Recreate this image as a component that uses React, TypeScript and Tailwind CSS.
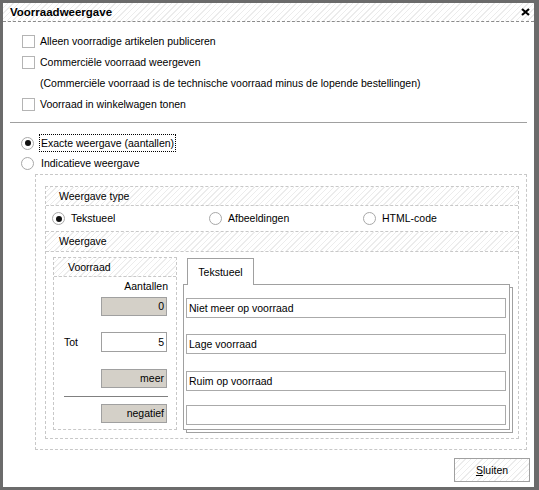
import React from "react";

const hatch =
  "bg-[repeating-linear-gradient(135deg,#ffffff_0px,#ffffff_3px,#ececec_3px,#ececec_4px)]";

function Checkbox() {
  return <span className="w-[13px] h-[13px] border border-[#b4b4b4] bg-white shrink-0" />;
}

function Radio({ checked = false }: { checked?: boolean }) {
  return (
    <span className="w-[13px] h-[13px] rounded-full border border-[#a8a8a8] bg-white shrink-0 flex items-center justify-center">
      {checked && <span className="w-[6px] h-[6px] rounded-full bg-[#111]" />}
    </span>
  );
}

function CheckRow({ label }: { label: string }) {
  return (
    <div className="h-[21px] flex items-center gap-[5px]">
      <Checkbox />
      <span>{label}</span>
    </div>
  );
}

function GrayField({ value }: { value: string }) {
  return (
    <div className="w-[66px] h-[19px] border border-[#a0a0a0] bg-[#d4d0c8] flex items-center justify-end pr-[2px]">
      {value}
    </div>
  );
}

function TextField({ value }: { value: string }) {
  return (
    <div className="h-[20px] border border-[#aaaaaa] bg-white flex items-center pl-[2px]">
      {value}
    </div>
  );
}

export default function App() {
  return (
    <div className="w-[539px] h-[490px] bg-[#6b6b6b] pt-[3px] pl-[3px] pr-[5px] pb-[3px] font-['Liberation_Sans',Arial,sans-serif] text-[10.5px] text-black leading-none">
      <div className="w-full h-full bg-white flex flex-col">
        {/* title bar */}
        <div className={`h-[19px] shrink-0 border-b border-dashed border-[#8a8a8a] flex items-center justify-between pl-[7px] pr-[4px] ${hatch}`}>
          <span className="font-bold text-[11.5px] mt-px">Voorraadweergave</span>
          <svg width="9" height="8" viewBox="0 0 9 8">
            <path d="M1 1 L8 7 M8 1 L1 7" stroke="#000" strokeWidth="2.2" />
          </svg>
        </div>

        {/* checkboxes */}
        <div className="pt-[9px] pl-[19px]">
          <CheckRow label="Alleen voorradige artikelen publiceren" />
          <CheckRow label="Commerciële voorraad weergeven" />
          <div className="h-[21px] flex items-center pl-[18px]">
            (Commerciële voorraad is de technische voorraad minus de lopende bestellingen)
          </div>
          <CheckRow label="Voorraad in winkelwagen tonen" />
        </div>

        <div className="mt-[7px] ml-[7px] mr-[7px] h-px bg-[#a0a0a0]" />

        {/* radios */}
        <div className="mt-[10px] pl-[18px]">
          <div className="h-[20px] flex items-center gap-[5px]">
            <Radio checked />
            <span className="h-[18px] px-px border border-dotted border-black flex items-center">
              Exacte weergave (aantallen)
            </span>
          </div>
          <div className="h-[20px] flex items-center gap-[7px]">
            <Radio />
            <span>Indicatieve weergave</span>
          </div>
        </div>

        {/* indicative box */}
        <div className="mt-px ml-[32px] mr-[7px] h-[276px] border border-dashed border-[#c8c8c8] pt-[11px] pl-[9px] pr-[7px]">
          <div className="h-[253px] border border-dashed border-[#c8c8c8] flex flex-col">
            <div className={`h-[19px] border-b border-dashed border-[#c8c8c8] flex items-center pl-[13px] ${hatch}`}>
              Weergave type
            </div>
            <div className="h-[26px] border-b border-dashed border-[#c8c8c8] flex items-center pl-[6px]">
              <div className="w-[157px] flex items-center gap-[6px]">
                <Radio checked />
                <span>Tekstueel</span>
              </div>
              <div className="w-[154px] flex items-center gap-[6px]">
                <Radio />
                <span>Afbeeldingen</span>
              </div>
              <div className="flex items-center gap-[6px]">
                <Radio />
                <span>HTML-code</span>
              </div>
            </div>
            <div className={`h-[20px] border-b border-dashed border-[#c8c8c8] flex items-center pl-[13px] ${hatch}`}>
              Weergave
            </div>

            <div className="flex items-start pl-[7px] pt-[5px]">
              {/* Voorraad column */}
              <div className="w-[124px] h-[173px] border border-dashed border-[#c8c8c8] flex flex-col">
                <div className={`h-[19px] border-b border-dashed border-[#c8c8c8] flex items-center pl-[14px] ${hatch}`}>
                  Voorraad
                </div>
                <div className="h-[16px] flex items-center justify-end pr-[8px] mt-px">Aantallen</div>
                <div className="pl-[47px] mt-[3px]">
                  <GrayField value="0" />
                </div>
                <div className="flex items-center pl-[10px] mt-[16px]">
                  <span className="w-[37px]">Tot</span>
                  <div className="w-[66px] h-[20px] border border-[#a0a0a0] bg-white flex items-center justify-end pr-[2px]">
                    5
                  </div>
                </div>
                <div className="pl-[47px] mt-[17px]">
                  <GrayField value="meer" />
                </div>
                <div className="ml-[10px] w-[104px] h-px bg-[#808080] mt-[8px]" />
                <div className="pl-[47px] mt-[7px]">
                  <GrayField value="negatief" />
                </div>
              </div>

              {/* Tab panel */}
              <div className="ml-[6px] pt-px flex flex-col">
                <div className="ml-[4px] w-[67px] h-[27px] -mb-px relative z-10 bg-white border border-b-0 border-[#a0a0a0] flex items-center justify-center">
                  Tekstueel
                </div>
                <div className="w-[327px] h-[146px] border border-[#a0a0a0] bg-white shadow-[3px_3px_0_-1px_#ffffff,3px_3px_0_0_#a0a0a0] pl-[2px] pr-[3px] pt-[13px]">
                  <TextField value="Niet meer op voorraad" />
                  <div className="mt-[16px]">
                    <TextField value="Lage voorraad" />
                  </div>
                  <div className="mt-[17px]">
                    <TextField value="Ruim op voorraad" />
                  </div>
                  <div className="mt-[14px]">
                    <TextField value="" />
                  </div>
                </div>
              </div>
            </div>
          </div>
        </div>

        {/* footer */}
        <div className="flex justify-end mt-[8px] mr-[4px]">
          <button className={`w-[76px] h-[24px] border border-[#a0a0a0] flex items-center justify-center ${hatch}`}>
            <span>
              <span className="underline">S</span>luiten
            </span>
          </button>
        </div>
      </div>
    </div>
  );
}
